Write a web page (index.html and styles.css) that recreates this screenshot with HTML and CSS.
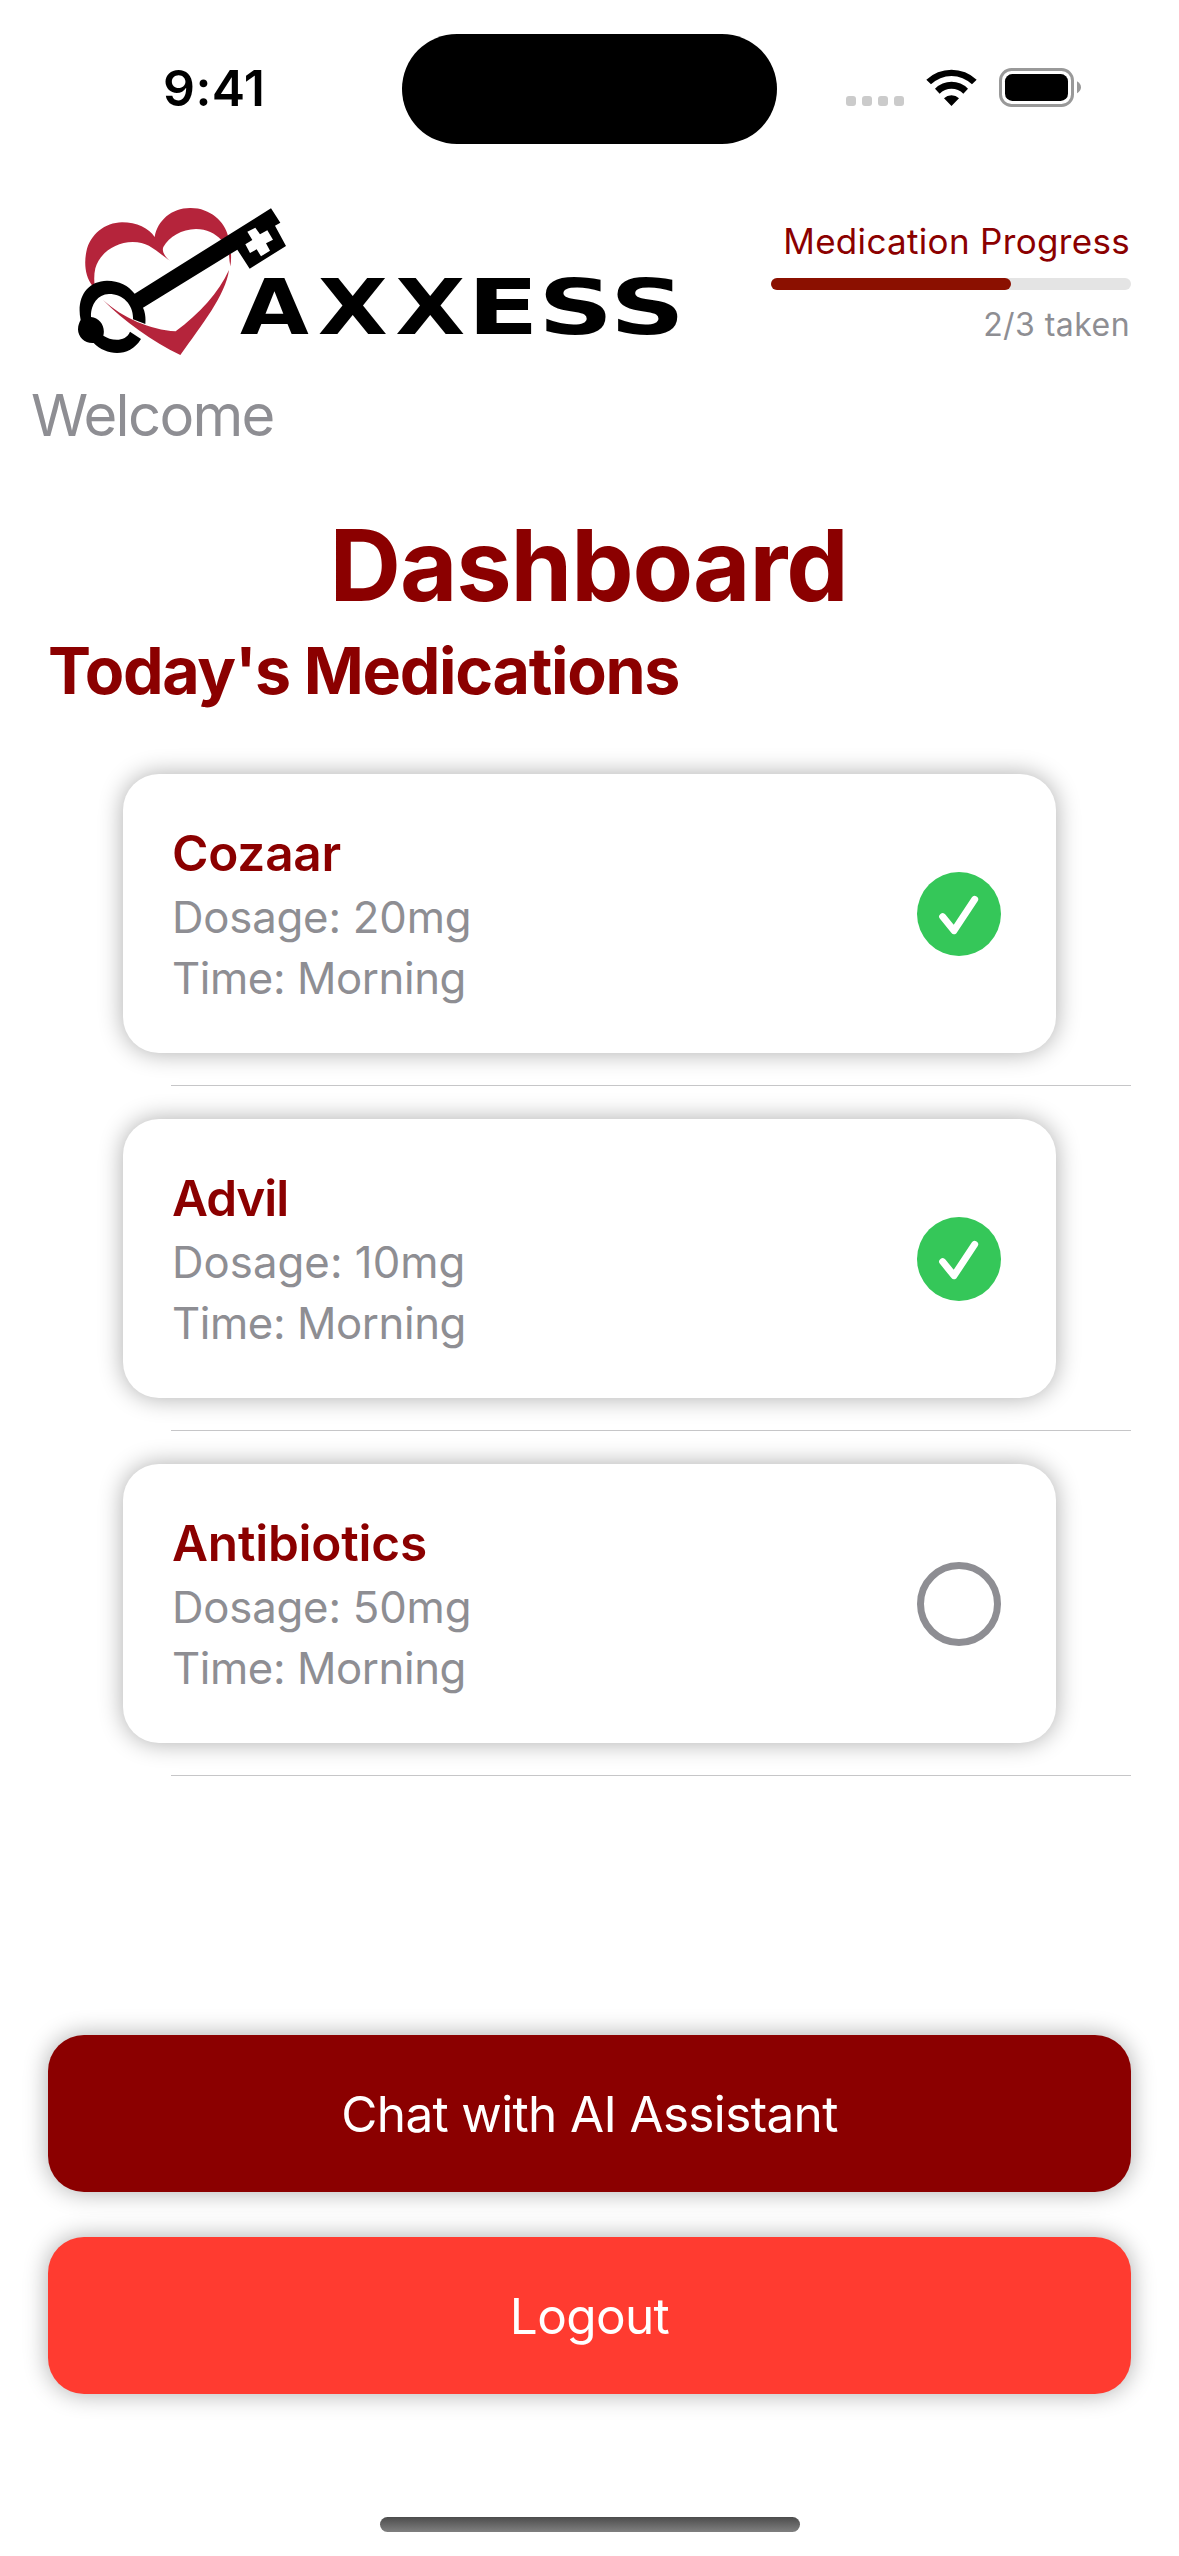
FILE: index.html
```html
<!DOCTYPE html>
<html lang="en">
<head>
<meta charset="utf-8">
<title>Dashboard</title>
<link rel="stylesheet" href="styles.css">
</head>
<body>
<div class="screen">
  <div class="status-bar">
    <div class="clock"><span>9:41</span></div>
    <div class="island"></div>
    <svg class="status-icons" viewBox="0 0 240 60" aria-hidden="true">
      <g fill="#cbcbcb"><rect x="0" y="36" width="10" height="10" rx="3"/><rect x="16" y="36" width="10" height="10" rx="3"/><rect x="32" y="36" width="10" height="10" rx="3"/><rect x="48" y="36" width="10" height="10" rx="3"/></g>
      <g transform="translate(-106 -40) scale(.33333)">
        <path d="M559 179.500A109 109 0 0 1 710 179.500L696 193A88 88 0 0 0 573 193Z M585 206A70 70 0 0 1 684 206L670 221A50 50 0 0 0 599 221Z M612 235A32 32 0 0 1 657 235L634.500 258Z"/>
        <rect x="781.500" y="148.500" width="216" height="108" rx="33" fill="none" stroke="#999" stroke-width="9"/>
        <rect x="795" y="162" width="189" height="81" rx="22"/>
        <path d="M1011 184Q1023 191 1023 202Q1023 213 1011 220Z" fill="#999"/>
      </g>
    </svg>
  </div>

  <header class="header">
    <svg class="logo" viewBox="0 0 1920 540" role="img" aria-label="Axxess">
      <g fill="#b5243b">
        <path d="M98 289C75 260 72 220 79 185C90 133 135 98 186 97C230 97 267 115 284 141C292 92 335 54 390 54C450 53 495 95 504 138L484 150C465 130 440 117 408 117C365 118 328 140 310 171C305 183 313 198 330 213C285 180 265 156 218 156C165 157 118 190 106 235C102 252 102 270 104 286Z"/>
        <path d="M507 193L513 191Q514 212 511 229Q508 215 507 193Z"/>
      </g>
      <path d="M224 311L633 55L661 98L645 107L678 168L569 236L532 179L249 353C257 370 257 386 256 402L219 388C221 345 190 312 147 312C112 313 92 345 93 381C120 383 137 410 130 437C152 452 197 458 210 425L243 447C208 505 138 497 101 459C75 461 54 442 54 418C54 405 59 395 62 390C48 325 80 273 141 272C178 272 205 287 224 311Z"/>
      <path fill="#fff" d="M562 125L586 113L600 133L622 121L639 149L618 160L630 182L603 199L590 178L570 189L556 163L577 150Z"/>
      <path fill="#b5243b" d="M129 330C190 385 270 419 347 424C420 369 475 310 507 240C497 315 425 405 361 495C278 455 190 393 129 330Z"/>
      <g class="wordmark">
        <text transform="translate(540 431) scale(1.155 1)">A</text>
        <text transform="translate(773 431) scale(1.18 1)">X</text>
        <text transform="translate(1006 431) scale(1.18 1)">X</text>
        <text transform="translate(1222 431) scale(1.36 1)">E</text>
        <text transform="translate(1435 431) scale(1.35 1)">S</text>
        <text transform="translate(1650 431) scale(1.35 1)">S</text>
      </g>
    </svg>
    <div class="progress">
      <div class="progress-title">Medication Progress</div>
      <div class="track"><div class="fill"></div></div>
      <div class="progress-count">2/3 taken</div>
    </div>
  </header>

  <div class="welcome">Welcome</div>
  <h1 class="title">Dashboard</h1>
  <h2 class="subtitle">Today's Medications</h2>

  <ul class="list">
    <li class="item">
      <div class="card">
        <div class="info"><div class="name">Cozaar</div><div class="detail">Dosage: 20mg</div><div class="detail time">Time: Morning</div></div>
        <svg class="check" viewBox="0 0 252 252"><circle cx="126" cy="126" r="126" fill="#35c759"/><path d="M77 134L111 176L173 82" fill="none" stroke="#fff" stroke-width="21" stroke-linecap="round" stroke-linejoin="round"/></svg>
      </div>
    </li>
    <li class="item">
      <div class="card">
        <div class="info"><div class="name tight">Advil</div><div class="detail wide">Dosage: 10mg</div><div class="detail time">Time: Morning</div></div>
        <svg class="check" viewBox="0 0 252 252"><circle cx="126" cy="126" r="126" fill="#35c759"/><path d="M77 134L111 176L173 82" fill="none" stroke="#fff" stroke-width="21" stroke-linecap="round" stroke-linejoin="round"/></svg>
      </div>
    </li>
    <li class="item">
      <div class="card">
        <div class="info"><div class="name">Antibiotics</div><div class="detail">Dosage: 50mg</div><div class="detail time">Time: Morning</div></div>
        <svg class="check" viewBox="0 0 252 252"><circle cx="126" cy="126" r="115.500" fill="none" stroke="#8e8e93" stroke-width="21"/></svg>
      </div>
    </li>
  </ul>

  <div class="actions">
    <button class="button chat">Chat with AI Assistant</button>
    <button class="button logout">Logout</button>
  </div>
  <div class="home-bar"></div>
</div>
</body>
</html>
```
FILE: styles.css
```css
* { box-sizing: border-box; }
body {
  margin: 0;
  background: #fff;
  font-family: Inter, "Liberation Sans", sans-serif;
  color: #8e8e93;
}
.screen {
  width: 1179px;
  height: 2556px;
  display: flex;
  flex-direction: column;
  overflow: hidden;
}
.status-bar {
  height: 190px;
  flex: none;
  display: grid;
  grid-template-columns: 402px 375px 1fr;
  padding-top: 34px;
}
.clock {
  height: 110px;
  padding-left: 163px;
  font-size: 50px;
  font-weight: 600;
  line-height: 108px;
  letter-spacing: .4px;
  color: #000;
}
.island { height: 110px; border-radius: 55px; background: #000; }
.status-icons { width: 240px; height: 60px; margin: 26px 0 0 69px; }
.header {
  flex: none;
  height: 180px;
  padding: 0 48px 0 60px;
  display: flex;
  justify-content: space-between;
}
.logo { width: 640px; height: 180px; flex: none; }
.wordmark { font: bold 231px "DejaVu Sans", sans-serif; fill: #000; }
.progress { width: 360px; padding-top: 29px; text-align: right; }
.progress-title {
  padding-right: 1px;
  font-size: 35px;
  line-height: 44px;
  letter-spacing: .32px;
  color: #8b0000;
}
.track { height: 12px; margin-top: 15px; border-radius: 6px; background: #e4e4e4; }
.fill { width: 240px; height: 12px; border-radius: 6px; background: #8b1000; }
.progress-count {
  padding-right: 1px;
  margin-top: 15px;
  font-size: 32px;
  line-height: 40px;
  letter-spacing: .45px;
}
.welcome {
  flex: none;
  padding-left: 31px;
  margin-top: 9px;
  font-size: 58px;
  line-height: 72px;
  letter-spacing: -1.700px;
}
.title {
  margin: 50px 0 0;
  padding-right: 2px;
  flex: none;
  text-align: center;
  font-size: 99px;
  line-height: 128px;
  letter-spacing: -1.100px;
  color: #8b0000;
}
.subtitle {
  margin: 2px 0 0;
  padding-left: 48px;
  flex: none;
  font-size: 64.500px;
  line-height: 80px;
  letter-spacing: -1.300px;
  color: #8b0000;
}
.list { list-style: none; flex: none; margin: 0; padding: 63px 0 0; }
.item { height: 345px; display: flex; flex-direction: column; }
.item::after {
  content: "";
  height: 1px;
  margin: 32px 48px 0 171px;
  background: #c6c6c8;
}
.card {
  height: 279px;
  flex: none;
  margin: 0 123px;
  padding: 0 55px 0 49px;
  display: flex;
  align-items: center;
  justify-content: space-between;
  background: #fff;
  border-radius: 36px;
  box-shadow: 0 0 24px rgba(0, 0, 0, .33);
}
.info { padding-top: 2px; }
.name {
  margin-bottom: 2px;
  font-size: 49.500px;
  line-height: 64px;
  font-weight: 600;
  letter-spacing: -.200px;
  color: #8b0000;
}
.tight { letter-spacing: -1.100px; }
.detail { font-size: 43.700px; line-height: 61px; letter-spacing: -.200px; }
.wide { letter-spacing: .050px; }
.time { letter-spacing: -.400px; }
.check { width: 84px; height: 84px; }
.actions { flex: none; margin-top: 226px; padding: 0 48px; display: grid; gap: 45px; }
.button {
  height: 157px;
  padding: 0;
  border: 0;
  border-radius: 36px;
  font-family: inherit;
  font-size: 49.500px;
  letter-spacing: -.650px;
  color: #fff;
  box-shadow: 0 0 24px rgba(0, 0, 0, .33);
}
.chat { background: #8b0000; }
.logout { background: #ff3b30; }
.home-bar {
  flex: none;
  width: 420px;
  height: 15px;
  margin: 123px auto 0;
  border-radius: 8px;
  background: linear-gradient(#4c4c4c, #808080);
}
```
